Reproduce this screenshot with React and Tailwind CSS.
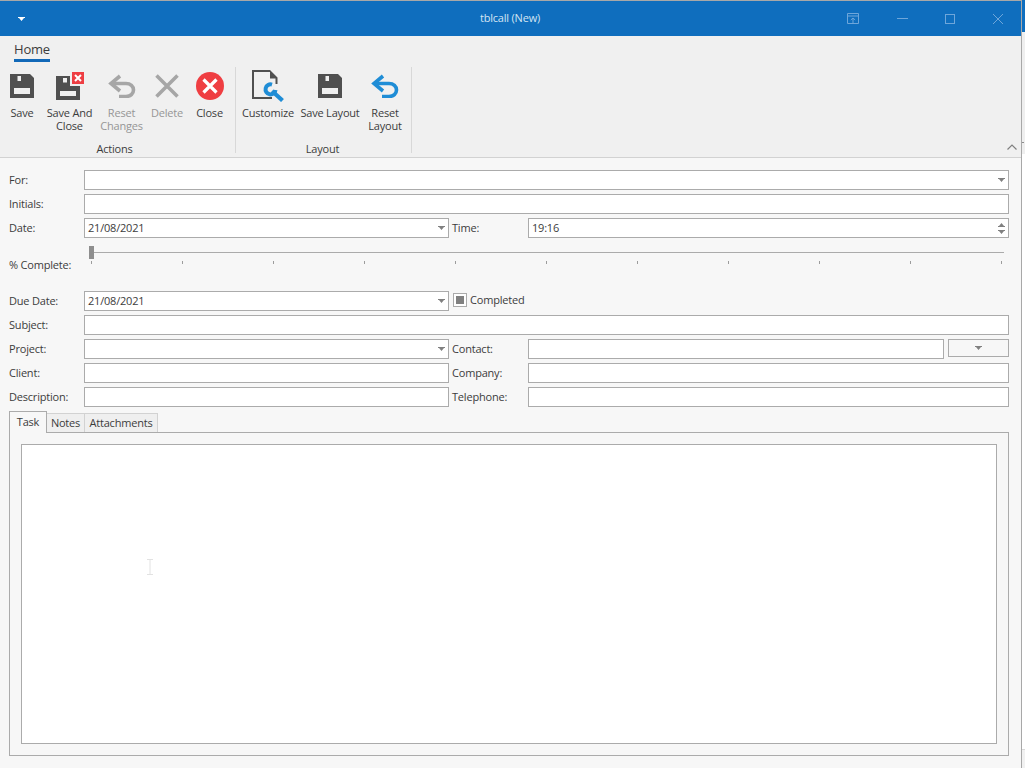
const textFont = "font-['Open_Sans',sans-serif]";

function Floppy({ className }) {
  return (
    <svg viewBox="0 0 24 24" className={className}>
      <path fillRule="evenodd" fill="#505050" d="M0 0H20L24 4V24H0ZM7.5 2V7H11V2ZM4 14V20H20V14Z" />
    </svg>
  );
}

function FloppyClose() {
  return (
    <svg viewBox="0 0 28 28" className="w-[28px] h-[28px]">
      <path fillRule="evenodd" fill="#505050" d="M0 4H14V14H24V28H0ZM7 6V10.5H11V6ZM4 19V24H20V19Z" />
      <rect x="16" y="0" width="12" height="12" fill="#ee3e43" />
      <path d="M19 3L25 9M25 3L19 9" stroke="#fff" strokeWidth="2" />
    </svg>
  );
}

function UndoArrow({ color, className }) {
  return (
    <svg viewBox="0 0 28 24" className={className}>
      <path d="M12 2L3 9.5L12 17" fill="none" stroke={color} strokeWidth="3.6" />
      <path d="M4 9.5H18C22.5 9.5 25.5 12.5 25.5 16C25.5 19.5 22.5 22.5 18 22.5H11" fill="none" stroke={color} strokeWidth="3.6" />
    </svg>
  );
}

function Customize() {
  return (
    <svg viewBox="0 0 33 32" className="w-[33px] h-[32px] -mb-[2px]">
      <path d="M18 1H1V28H20" fill="none" stroke="#505050" strokeWidth="2" />
      <path d="M18 0L25.5 7.5V14H23.5V8.5H18Z" fill="#505050" />
      <path d="M20 14.6A5 5 0 1 0 23.5 20" fill="none" stroke="#1f8dd6" strokeWidth="4" />
      <path d="M20 21L30.5 30.5" fill="none" stroke="#1f8dd6" strokeWidth="4.2" />
    </svg>
  );
}

function RibbonButton({ width, lines, disabled, children }) {
  return (
    <div className={`flex flex-col items-center ${width}`}>
      <div className="h-[33px] flex items-end justify-center">{children}</div>
      <div className={`mt-[6px] text-center leading-[13px] text-[11px] ${disabled ? "text-[#969696]" : "text-[#3c3c3c]"}`}>
        {lines.map((l) => (
          <div key={l} className="whitespace-nowrap">{l}</div>
        ))}
      </div>
    </div>
  );
}

function Caret() {
  return (
    <svg viewBox="0 0 7 4" className="w-[7px] h-[4px]">
      <path d="M0 0H7V1H6L3.5 4L1 1H0Z" fill="#808080" />
    </svg>
  );
}

function Input({ width, value, combo, spin, grow }) {
  return (
    <div className={`h-[20px] border border-[#ababab] bg-white flex items-center justify-between pl-[3px] pr-[3.5px] text-[11px] text-[#3c3c3c] ${grow ? "flex-1 min-w-0" : width}`}>
      <span>{value}</span>
      {combo && <Caret />}
      {spin && (
        <span className="flex flex-col gap-[3px]">
          <span className="rotate-180 flex"><Caret /></span>
          <span className="flex"><Caret /></span>
        </span>
      )}
    </div>
  );
}

function Label({ width, children }) {
  return <div className={`text-[11px] text-[#3c3c3c] whitespace-nowrap ${width}`}>{children}</div>;
}

function Row({ children }) {
  return <div className="flex items-center h-[20px] mb-[4px] pl-[9px] pr-[12px]">{children}</div>;
}

export default function App() {
  return (
    <div className={`relative flex w-[1025px] h-[768px] bg-white overflow-hidden tracking-[-0.2px] ${textFont}`}>
      <div className="w-[1022px] h-[768px] flex flex-col border-t border-r border-[#a8a8a8] bg-[#f7f7f7]">
        {/* title bar */}
        <div className="h-[35px] shrink-0 bg-[#0f6ebe] flex items-center">
          <div className="w-[42px] flex justify-center">
            <svg viewBox="0 0 7 4" className="w-[7px] h-[4px]"><path d="M0 0H7V1H6L3.5 4L1 1H0Z" fill="#fff" /></svg>
          </div>
          <div className="flex-1 text-center text-[11px] text-[#d3e4f3] pl-[131px]">tblcall (New)</div>
          <div className="flex items-center text-[#6ea6da]">
            <svg viewBox="0 0 12 11" className="w-[12px] h-[11px] mr-[38px]" fill="none" stroke="currentColor">
              <path d="M.5.5H11.5V10.5H.5ZM.5 3H11.5M6 10V5M3.8 7L6 5L8.2 7" />
            </svg>
            <svg viewBox="0 0 11 1" className="w-[11px] h-[1px] mr-[37px]"><rect width="11" height="1" fill="currentColor" /></svg>
            <svg viewBox="0 0 10 10" className="w-[10px] h-[10px] mr-[38px]" fill="none" stroke="currentColor"><rect x=".5" y=".5" width="9" height="9" /></svg>
            <svg viewBox="0 0 10 10" className="w-[10px] h-[10px] mr-[18px]" fill="none" stroke="currentColor"><path d="M0 0L10 10M10 0L0 10" /></svg>
          </div>
        </div>

        {/* ribbon */}
        <div className="relative h-[122px] shrink-0 bg-[#f0f0f0] border-b border-[#d2d2d2]">
          <div className="h-[31px] flex items-start pl-[14px] pt-[5px]">
            <div className="h-[21px] border-b-[3px] border-[#1269b8] text-[13px] leading-[17px] text-[#3c3c3c]">Home</div>
          </div>
          <div className="flex h-[86px]">
            <div className="w-[236px] border-r border-[#d8d8d8] flex flex-col">
              <div className="flex flex-1 pl-[4px]">
                <RibbonButton width="w-[36px]" lines={["Save"]}><Floppy className="w-[24px] h-[24px] mb-[2px]" /></RibbonButton>
                <RibbonButton width="w-[51px] ml-[4px]" lines={["Save And", "Close"]}><FloppyClose /></RibbonButton>
                <RibbonButton width="w-[47px] ml-[3px]" disabled lines={["Reset", "Changes"]}><UndoArrow color="#a6a6a6" className="w-[28px] h-[24px] mb-[2px]" /></RibbonButton>
                <RibbonButton width="w-[38px] ml-[3px]" disabled lines={["Delete"]}>
                  <svg viewBox="0 0 24 24" className="w-[24px] h-[24px] mb-[2px]"><path d="M1.5 1.5L22.5 22.5M22.5 1.5L1.5 22.5" stroke="#a6a6a6" strokeWidth="3.6" /></svg>
                </RibbonButton>
                <RibbonButton width="w-[35px] ml-[6px]" lines={["Close"]}>
                  <svg viewBox="0 0 28 28" className="w-[28px] h-[28px]">
                    <circle cx="14" cy="14" r="14" fill="#ef3e42" />
                    <path d="M7.5 7.5L20.5 20.5M20.5 7.5L7.5 20.5" stroke="#fff" strokeWidth="3.2" />
                  </svg>
                </RibbonButton>
              </div>
              <div className="text-center text-[11px] leading-[13px] text-[#3c3c3c] -mb-[2px] -ml-[6px]">Actions</div>
            </div>
            <div className="w-[176px] border-r border-[#d8d8d8] flex flex-col">
              <div className="flex flex-1 pl-[7px]">
                <RibbonButton width="w-[50px]" lines={["Customize"]}><Customize /></RibbonButton>
                <RibbonButton width="w-[64px] ml-[5px]" lines={["Save Layout"]}><Floppy className="w-[24px] h-[24px] mb-[2px]" /></RibbonButton>
                <RibbonButton width="w-[38px] ml-[4px]" lines={["Reset", "Layout"]}><UndoArrow color="#1f8dd6" className="w-[28px] h-[24px] mb-[2px]" /></RibbonButton>
              </div>
              <div className="text-center text-[11px] leading-[13px] text-[#3c3c3c] -mb-[2px] -ml-[2px]">Layout</div>
            </div>
          </div>
          <svg viewBox="0 0 10 6" className="absolute right-[4px] bottom-[7px] w-[10px] h-[6px]" fill="none" stroke="#808080" strokeWidth="1.2"><path d="M.5 5.5L5 1L9.5 5.5" /></svg>
        </div>

        {/* form */}
        <div className="flex-1 flex flex-col pt-[12px]">
          <Row><Label width="w-[75px]">For:</Label><Input grow combo /></Row>
          <Row><Label width="w-[75px]">Initials:</Label><Input grow /></Row>
          <div className="flex items-center h-[20px] pl-[9px] pr-[12px]">
            <Label width="w-[75px]">Date:</Label>
            <Input width="w-[365px]" value="21/08/2021" combo />
            <Label width="w-[79px] pl-[3px]">Time:</Label>
            <Input grow value="19:16" spin />
          </div>

          <div className="h-[53px] flex pl-[9px]">
            <div className="w-[80px] pt-[20px] text-[11px] leading-[14px] text-[#3c3c3c] whitespace-nowrap">% Complete:</div>
            <div className="w-[915px] pt-[8px]">
              <div className="relative h-[13px] flex items-center">
                <div className="w-full h-[1px] bg-[#ababab]" />
                <div className="absolute left-0 top-0 w-[5px] h-[13px] bg-[#8e8e8e]" />
              </div>
              <div className="flex justify-between pl-[2px] pr-[2px] mt-[2px]">
                {[0, 1, 2, 3, 4, 5, 6, 7, 8, 9, 10].map((i) => (
                  <div key={i} className="w-[1px] h-[3px] bg-[#9c9c9c]" />
                ))}
              </div>
            </div>
          </div>

          <div className="flex items-center h-[20px] mb-[4px] pl-[9px] pr-[12px]">
            <Label width="w-[75px]">Due Date:</Label>
            <Input width="w-[365px]" value="21/08/2021" combo />
            <div className="ml-[4px] w-[14px] h-[14px] border border-[#ababab] bg-white flex items-center justify-center -mt-[2px]">
              <div className="w-[8px] h-[8px] bg-[#808080]" />
            </div>
            <div className="ml-[3px] -mt-[2px] text-[11px] text-[#3c3c3c]">Completed</div>
          </div>
          <Row><Label width="w-[75px]">Subject:</Label><Input grow /></Row>
          <Row>
            <Label width="w-[75px]">Project:</Label>
            <Input width="w-[365px]" combo />
            <Label width="w-[79px] pl-[3px]">Contact:</Label>
            <Input grow />
            <div className="ml-[4px] w-[61px] h-[18px] -mt-[2px] border border-[#ababab] bg-[#f7f7f7] flex items-center justify-center"><Caret /></div>
          </Row>
          <Row>
            <Label width="w-[75px]">Client:</Label>
            <Input width="w-[365px]" />
            <Label width="w-[79px] pl-[3px]">Company:</Label>
            <Input grow />
          </Row>
          <Row>
            <Label width="w-[75px]">Description:</Label>
            <Input width="w-[365px]" />
            <Label width="w-[79px] pl-[3px]">Telephone:</Label>
            <Input grow />
          </Row>

          {/* tabs */}
          <div className="flex items-end h-[21px] ml-[9px] relative z-10">
            <div className="w-[38px] h-[22px] -mb-[1px] border border-b-0 border-[#ababab] bg-[#f7f7f7] text-center text-[11px] leading-[19px] text-[#3c3c3c]">Task</div>
            <div className="w-[38px] h-[19px] border-t border-r border-[#d2d2d2] bg-[#efefef] text-center text-[11px] leading-[18px] text-[#3c3c3c]">Notes</div>
            <div className="w-[73px] h-[19px] border-t border-r border-[#d2d2d2] bg-[#efefef] text-center text-[11px] leading-[18px] text-[#3c3c3c]">Attachments</div>
          </div>
          <div className="ml-[9px] w-[1000px] h-[324px] border border-[#ababab] p-[11px]">
            <div className="relative w-full h-full border border-[#ababab] bg-white">
              <svg viewBox="0 0 6 16" className="absolute left-[125px] top-[114px] w-[6px] h-[16px]" fill="none" stroke="#e2e2e2"><path d="M0 .5H6M3 .5V15.5M0 15.5H6" /></svg>
            </div>
          </div>
        </div>
      </div>

      {/* sliver of the window behind */}
      <div className="w-[3px] h-[768px] flex flex-col">
        <div className="h-[32px] bg-[#0f6ebe]" />
        <div className="h-[122px] bg-[#efefef] flex flex-col pt-[110px]">
          <div className="w-[2px] h-[1px] bg-[#8c8c8c]" />
        </div>
        <div className="h-[595px] bg-white" />
        <div className="flex-1 bg-[#f1f1f1] border-t border-[#d8d8d8]" />
      </div>
    </div>
  );
}
